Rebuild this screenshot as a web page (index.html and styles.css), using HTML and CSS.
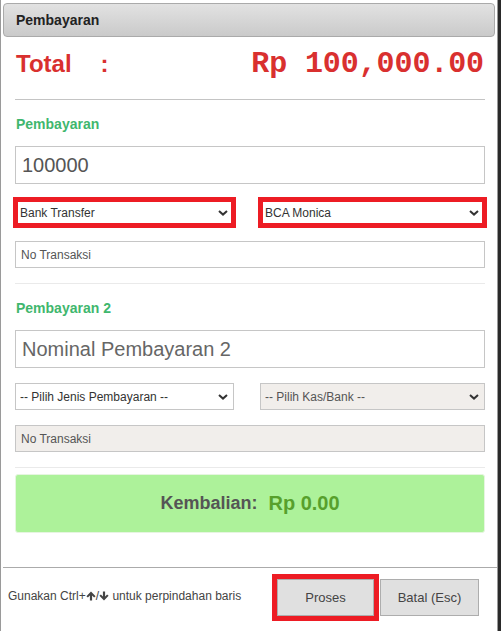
FILE: index.html
```html
<!DOCTYPE html>
<html lang="id">
<head>
    <meta charset="UTF-8">
    <meta name="viewport" content="width=device-width, initial-scale=1.0">
    <title>Pembayaran</title>
    <link rel="stylesheet" href="styles.css">
</head>
<body>

    <div class="dialog">
        <div class="titlebar">Pembayaran</div>

        <div class="content">
            <div class="total-row">
                <span class="total-label">Total<span class="colon">:</span></span>
                <span class="total-value">Rp 100,000.00</span>
            </div>
            <hr class="sep-main">

            <h4 class="section-title">Pembayaran</h4>
            <input type="text" class="input-lg" value="100000">
            <div class="select-row">
                <select class="marked">
                    <option>Bank Transfer</option>
                </select>
                <select class="marked">
                    <option>BCA Monica</option>
                </select>
            </div>
            <input type="text" class="input-sm" placeholder="No Transaksi">
            <hr class="sep">

            <h4 class="section-title">Pembayaran 2</h4>
            <input type="text" class="input-lg" placeholder="Nominal Pembayaran 2">
            <div class="select-row">
                <select>
                    <option>-- Pilih Jenis Pembayaran --</option>
                </select>
                <select disabled>
                    <option>-- Pilih Kas/Bank --</option>
                </select>
            </div>
            <input type="text" class="input-sm" placeholder="No Transaksi" disabled>
            <hr class="sep">

            <div class="change-box">
                <span class="change-label">Kembalian:</span>
                <span class="change-value">Rp 0.00</span>
            </div>
        </div>

        <div class="footer">
            <p class="hint">Gunakan Ctrl+<svg class="arrow" viewBox="0 0 10 10"><path d="M5 0.5 L9.6 5.2 L8.1 6.6 L6.1 4.6 L6.1 9.5 L3.9 9.5 L3.9 4.6 L1.9 6.6 L0.4 5.2 Z"/></svg>/<svg class="arrow" viewBox="0 0 10 10"><path d="M5 9.5 L9.6 4.8 L8.1 3.4 L6.1 5.4 L6.1 0.5 L3.9 0.5 L3.9 5.4 L1.9 3.4 L0.4 4.8 Z"/></svg> untuk perpindahan baris</p>
            <div class="buttons">
                <button type="button" class="btn marked-btn">Proses</button>
                <button type="button" class="btn">Batal (Esc)</button>
            </div>
        </div>
    </div>

</body>
</html>
```

FILE: styles.css
```css
/* Halaman */
body {
    margin: 0;
    background-color: #2a2a2a;
    font-family: "Liberation Sans", Arial, sans-serif;
    color: #333;
}

/* Kotak dialog */
.dialog {
    width: 496px;
    height: 630px;
    background-color: #fff;
    border: 1px solid #9a9a9a;
    border-top: none;
    padding-top: 1px;
    display: flex;
    flex-direction: column;
}

.titlebar {
    margin: 2px 2px 0 2px;
    height: 32px;
    line-height: 32px;
    padding-left: 12px;
    border: 1px solid #aaa;
    border-radius: 4px;
    background: linear-gradient(#e2e2e2, #cacaca);
    font-size: 14px;
    font-weight: bold;
    color: #222;
}

.content {
    padding: 0 12px 0 14px;
    flex: 1;
}

/* Total */
.total-row {
    display: flex;
    justify-content: space-between;
    align-items: baseline;
    margin-top: 10px;
    height: 34px;
    padding: 0 1px 0 1px;
    color: #d9302f;
    font-weight: bold;
}

.total-label {
    font-size: 24px;
}

.colon {
    margin-left: 29px;
}

.total-value {
    font-family: "Liberation Mono", "Courier New", monospace;
    font-size: 30px;
    letter-spacing: -0.1px;
}

.sep-main {
    border: none;
    border-top: 1px solid #c4c4c4;
    margin: 18px 0 0 0;
}

.sep {
    border: none;
    border-top: 1px solid #eaeaea;
    margin: 15px 0 0 0;
}

.section-title {
    margin: 15px 0 0 1px;
    font-size: 14px;
    line-height: 18px;
    color: #3fb76e;
}

/* Input */
input {
    display: block;
    box-sizing: border-box;
    width: 100%;
    font-family: "Liberation Sans", Arial, sans-serif;
    color: #555;
    border: 1px solid #c6c6c6;
    background-color: #fff;
    outline: none;
}

input::placeholder {
    color: #666;
    opacity: 1;
}

input:disabled {
    background-color: #f1eeeb;
}

.input-lg {
    height: 38px;
    margin-top: 13px;
    padding: 0 6px;
    font-size: 20px;
}

.input-sm {
    height: 27px;
    margin-top: 15px;
    padding: 0 5px;
    font-size: 12px;
}

.input-sm::placeholder {
    color: #555;
}

/* Select */
.select-row {
    display: grid;
    grid-template-columns: 219px 1fr;
    column-gap: 26px;
    margin-top: 15px;
}

select {
    appearance: none;
    box-sizing: border-box;
    height: 27px;
    width: 100%;
    font-family: "Liberation Sans", Arial, sans-serif;
    font-size: 12px;
    color: #333;
    border: 1px solid #c6c6c6;
    background-color: #fff;
    background-image: url("data:image/svg+xml,%3Csvg xmlns='http://www.w3.org/2000/svg' viewBox='0 0 10 6'%3E%3Cpath d='M1 1 L5 4.6 L9 1' fill='none' stroke='%23333' stroke-width='2'/%3E%3C/svg%3E");
    background-repeat: no-repeat;
    background-position: right 5px center;
    background-size: 10px 6px;
    padding: 0 20px 0 4px;
    border-radius: 0;
}

select:disabled {
    background-color: #f1eeeb;
    color: #555;
    opacity: 1;
}

/* Tanda merah */
.marked {
    outline: 5px solid #ed1c24;
    outline-offset: -3px;
}

/* Kembalian */
.change-box {
    margin-top: 6px;
    height: 59px;
    box-sizing: border-box;
    display: flex;
    justify-content: center;
    align-items: center;
    gap: 11px;
    background-color: #adf29a;
    border: 1px solid #e6f5e0;
    border-radius: 3px;
    font-weight: bold;
}

.change-label {
    font-size: 18px;
    color: #555;
}

.change-value {
    font-size: 20px;
    color: #57a02c;
}

/* Footer */
.footer {
    margin: 0 0 0 2px;
    border-top: 1px solid #ababab;
    height: 63px;
    display: flex;
    justify-content: space-between;
    align-items: flex-start;
}

.hint {
    margin: 21px 0 0 5px;
    font-size: 12px;
    color: #444;
}

.arrow {
    width: 10px;
    height: 10px;
    fill: #444;
    vertical-align: -1px;
}

.buttons {
    display: flex;
    gap: 6px;
    margin: 11px 18px 0 0;
}

.btn {
    height: 37px;
    font-family: "Liberation Sans", Arial, sans-serif;
    font-size: 13px;
    color: #444;
    background-color: #e0e0e0;
    border: 1px solid #adadad;
    border-radius: 0;
    padding: 0;
    width: 99px;
}

.marked-btn {
    width: 97px;
    outline: 5px solid #ed1c24;
    outline-offset: 0;
}
```
